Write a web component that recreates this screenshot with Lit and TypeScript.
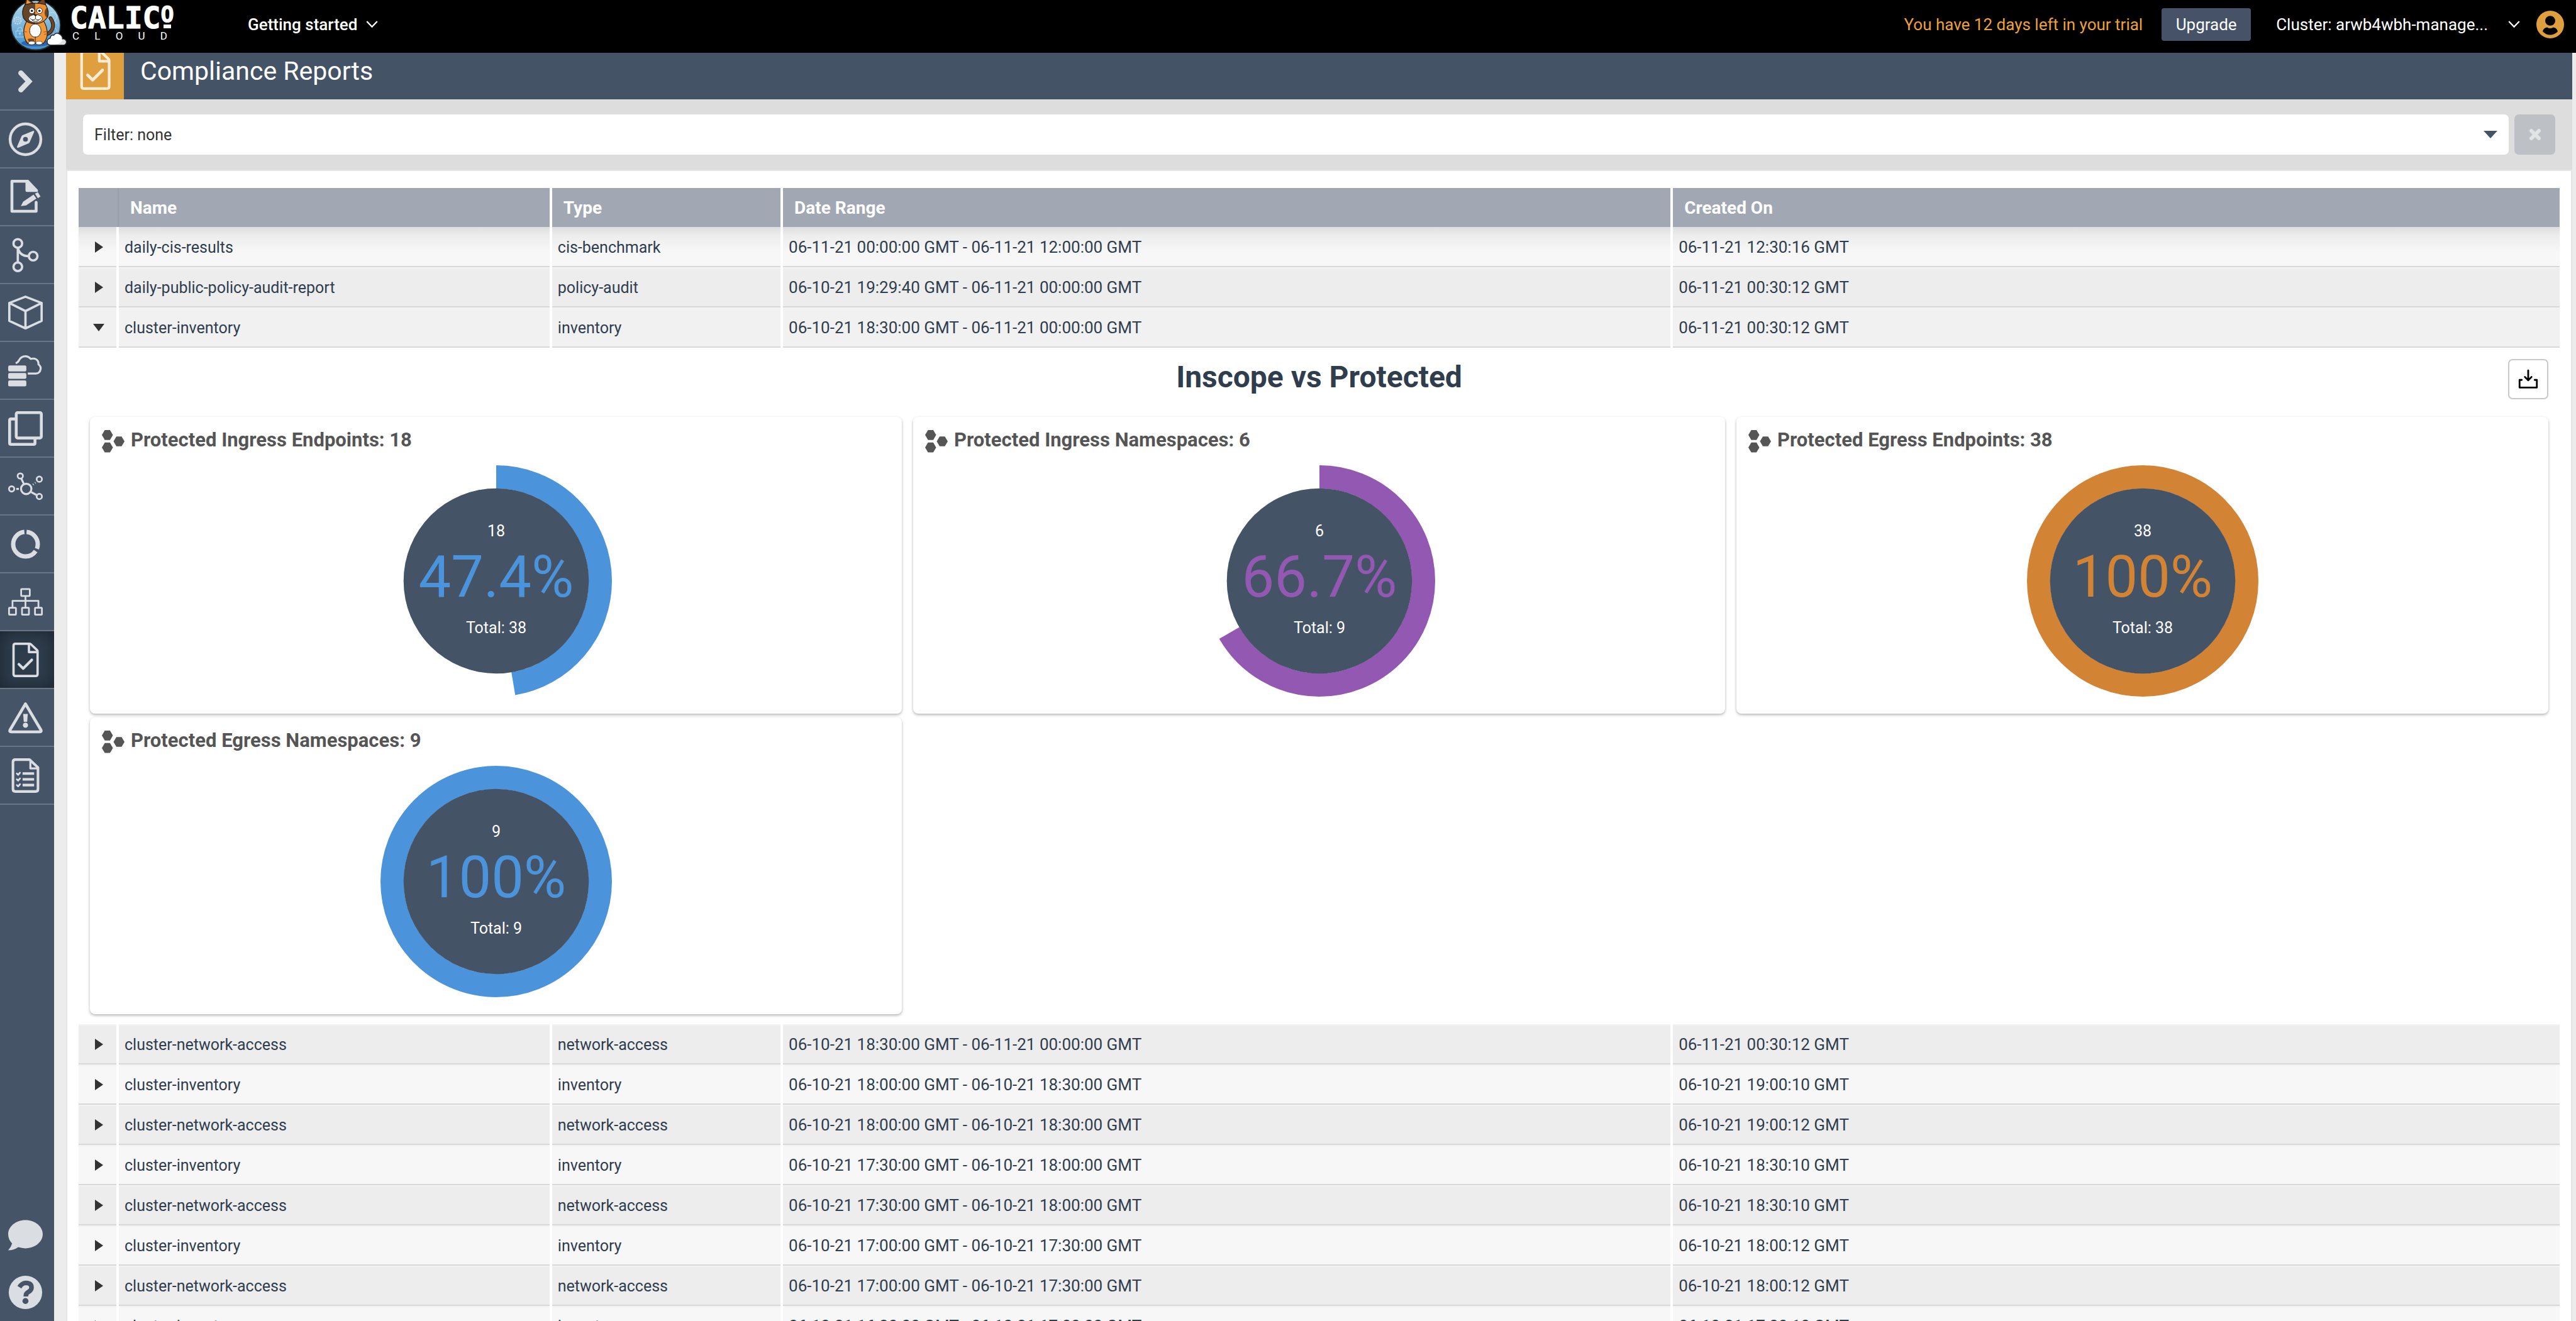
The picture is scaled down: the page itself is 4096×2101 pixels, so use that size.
import { LitElement, html, css, svg, nothing, type TemplateResult, type SVGTemplateResult } from "lit";
import { customElement, property, state } from "lit/decorators.js";
import { classMap } from "lit/directives/class-map.js";

interface Report {
  name: string;
  type: string;
  range: string;
  created: string;
}

interface Gauge {
  title: string;
  count: number;
  total: number;
  tone: "blue" | "purple" | "orange";
}

const REPORTS: Report[] = [
  { name: "daily-cis-results", type: "cis-benchmark", range: "06-11-21 00:00:00 GMT - 06-11-21 12:00:00 GMT", created: "06-11-21 12:30:16 GMT" },
  { name: "daily-public-policy-audit-report", type: "policy-audit", range: "06-10-21 19:29:40 GMT - 06-11-21 00:00:00 GMT", created: "06-11-21 00:30:12 GMT" },
  { name: "cluster-inventory", type: "inventory", range: "06-10-21 18:30:00 GMT - 06-11-21 00:00:00 GMT", created: "06-11-21 00:30:12 GMT" },
  { name: "cluster-network-access", type: "network-access", range: "06-10-21 18:30:00 GMT - 06-11-21 00:00:00 GMT", created: "06-11-21 00:30:12 GMT" },
  { name: "cluster-inventory", type: "inventory", range: "06-10-21 18:00:00 GMT - 06-10-21 18:30:00 GMT", created: "06-10-21 19:00:10 GMT" },
  { name: "cluster-network-access", type: "network-access", range: "06-10-21 18:00:00 GMT - 06-10-21 18:30:00 GMT", created: "06-10-21 19:00:12 GMT" },
  { name: "cluster-inventory", type: "inventory", range: "06-10-21 17:30:00 GMT - 06-10-21 18:00:00 GMT", created: "06-10-21 18:30:10 GMT" },
  { name: "cluster-network-access", type: "network-access", range: "06-10-21 17:30:00 GMT - 06-10-21 18:00:00 GMT", created: "06-10-21 18:30:10 GMT" },
  { name: "cluster-inventory", type: "inventory", range: "06-10-21 17:00:00 GMT - 06-10-21 17:30:00 GMT", created: "06-10-21 18:00:12 GMT" },
  { name: "cluster-network-access", type: "network-access", range: "06-10-21 17:00:00 GMT - 06-10-21 17:30:00 GMT", created: "06-10-21 18:00:12 GMT" },
  { name: "cluster-inventory", type: "inventory", range: "06-10-21 16:30:00 GMT - 06-10-21 17:00:00 GMT", created: "06-10-21 17:30:10 GMT" },
];

const GAUGES: Gauge[] = [
  { title: "Protected Ingress Endpoints", count: 18, total: 38, tone: "blue" },
  { title: "Protected Ingress Namespaces", count: 6, total: 9, tone: "purple" },
  { title: "Protected Egress Endpoints", count: 38, total: 38, tone: "orange" },
  { title: "Protected Egress Namespaces", count: 9, total: 9, tone: "blue" },
];

/* Document with folded corner and tick, shared by the menu and the page title. */
const docCheck = svg`
  <path d="M36 2H12.500Q9.300 2 9.300 5.200V54.800Q9.300 58 12.500 58H47.800Q51 58 51 54.800V15.500Q51 14 50 13L39.500 3Q38.500 2 36 2Z" stroke-width="4"/>
  <path d="M36 3V16.500H50.500" stroke-width="4"/>
  <path d="M18.500 37.500L26 45L41 30" stroke-width="4.500"/>`;

const MENU: { label: string; art: SVGTemplateResult; active?: boolean }[] = [
  { label: "Expand menu", art: svg`<path d="M22 15.500L36 30L22 44.500" stroke-width="9" stroke-linejoin="miter"/>` },
  {
    label: "Dashboard",
    art: svg`<circle cx="30" cy="30" r="26.700" stroke-width="4.800"/>
      <path class="solid" fill-rule="evenodd" d="M43 15.500Q45.500 14.500 45 17.500L37.500 34.500Q37 36 35.500 37L18 44.500Q14.500 45.500 15.500 42.500L23 25Q23.600 23.500 25 22.800ZM30 25.800A4.200 4.200 0 1 0 30 34.200A4.200 4.200 0 1 0 30 25.800Z"/>`,
  },
  {
    label: "Policies",
    art: svg`<path d="M32 2.500H6.500V54.500H48.500V39" stroke-width="5"/>
      <path class="solid" d="M30 0H35L51.500 17.500V21H32.500Q30 21 30 18.500Z"/>
      <path class="solid" d="M22 45.500L26 38L44 25.500L49 32.500L31 44.500Z"/>
      <path class="solid" d="M46.500 24L51.500 21.500L56 29L51.500 32Z"/>`,
  },
  {
    label: "Service graph",
    art: svg`<circle cx="16.700" cy="10" r="7.500" stroke-width="4"/><circle cx="16.700" cy="50.500" r="7.500" stroke-width="4"/><circle cx="43.300" cy="32" r="7.500" stroke-width="4"/>
      <path d="M16.700 18V43M17 18Q20 32 35.500 32" stroke-width="4"/>`,
  },
  { label: "Endpoints", art: svg`<path d="M30 2L58 13V44L30 57L2 44V13ZM2 13L30 27L58 13M30 27V57" stroke-width="4"/>` },
  {
    label: "Nodes",
    art: svg`<path d="M13 17Q17 16 18.500 12.500Q22 5 30 5Q35 5 39 9.500Q48 7.500 51.500 13.500Q53 16 52.500 19Q57 23 56.300 27Q55 35 48 35H34" stroke-width="3.500" stroke-linecap="butt"/>
      <rect class="solid" x="0" y="21" width="31.500" height="10.300" rx="2.500"/><rect class="solid" x="0" y="34" width="31.500" height="10.300" rx="2.500"/><rect class="solid" x="0" y="47" width="31.500" height="10.300" rx="2.500"/>`,
  },
  {
    label: "Network sets",
    art: svg`<rect x="14" y="2.500" width="43.500" height="44" rx="2.500" stroke-width="5"/><path d="M12 13.500H5Q2.500 13.500 2.500 16V55Q2.500 57.500 5 57.500H44Q46.500 57.500 46.500 55V49" stroke-width="5"/>`,
  },
  {
    label: "Managed clusters",
    art: svg`<circle cx="31.300" cy="34.400" r="9" stroke-width="3.500"/><circle cx="21" cy="12" r="4.600" stroke-width="3"/><circle cx="54" cy="17.600" r="4.600" stroke-width="3"/><circle cx="6" cy="34.400" r="4.600" stroke-width="3"/><circle cx="54" cy="47.600" r="4.600" stroke-width="3"/>
      <path d="M23 17L27 25.500M40 40L49 45M14 34.400H18.500M43 27L44 26.200M46.700 24.200L47.500 23.600" stroke-width="3.500" stroke-linecap="butt"/>`,
  },
  {
    label: "Usage",
    art: svg`<circle cx="30" cy="30" r="21.300" stroke-width="7.600" stroke-linecap="butt" pathLength="100" stroke-dasharray="29.500 3.500 64 3" stroke-dashoffset="-1.500" transform="rotate(-90 30 30)"/>`,
  },
  {
    label: "Topology",
    art: svg`<rect x="22.500" y="7.500" width="15" height="12" rx="1" stroke-width="3"/><rect x="1.500" y="40" width="12" height="12" rx="1" stroke-width="3"/><rect x="24" y="40" width="12" height="12" rx="1" stroke-width="3"/><rect x="46.500" y="40" width="12" height="12" rx="1" stroke-width="3"/>
      <path d="M7.500 39V28H52.500V39M30 20V39" stroke-width="3"/>`,
  },
  { label: "Compliance", art: docCheck, active: true },
  {
    label: "Alerts",
    art: svg`<path d="M30 6L57 51.500Q58 54.500 55 54.500H5Q2 54.500 3 51.500Z" stroke-width="5"/><path class="solid" d="M26 23.500H34L33 37H27Z"/><circle class="solid" cx="30" cy="43" r="4.500"/>`,
  },
  {
    label: "Logs",
    art: svg`<path d="M37 2.300H12.500Q8.300 2.300 8.300 6.500V53.500Q8.300 57.700 12.500 57.700H47.500Q51.700 57.700 51.700 53.500V16Z" stroke-width="4.500"/><path d="M38.500 3V17.500H51" stroke-width="3.500"/>
      <path d="M25 26.500H45M25 36.500H45M25 46.500H45" stroke-width="4.500" stroke-linecap="butt"/>
      <path d="M15 26.500L17.300 28.700L20.500 25M15 36.500L17.300 38.700L20.500 35M15 46.500L17.300 48.700L20.500 45" stroke-width="3"/>`,
  },
];

const FOOTER_MENU: { label: string; art: SVGTemplateResult }[] = [
  { label: "Feedback", art: svg`<path class="solid" d="M30 3.700C46.500 3.700 60 14.700 60 28.200S46.500 52.800 30 52.800Q23.500 52.800 17.500 50.800Q9.500 56.500 0 56.300Q5 51 6.800 44.500Q0 37.500 0 28.200C0 14.700 13.500 3.700 30 3.700Z"/>` },
  {
    label: "Help",
    art: svg`<circle class="solid" cx="30" cy="30" r="29"/><path class="cut" d="M19.500 21Q24 13.500 31 13.500Q40.500 14 40.500 21.500Q40.500 26 35.500 29Q30.500 31.500 30.500 37" stroke-width="8" stroke-linecap="butt"/><circle class="cut-dot" cx="30" cy="45" r="5.200"/>`,
  },
];

@customElement("app-mascot")
class AppMascot extends LitElement {
  static styles = css`
    :host { display: block; width: 95px; height: 84px; }
    svg { display: block; width: 100%; height: 100%; }
  `;

  render() {
    return html`<svg viewBox="50 0 314 276" aria-hidden="true">
      <defs>
        <linearGradient id="sky" x1="0" y1="0" x2="0" y2="1"><stop offset="0" stop-color="#b9dcea"/><stop offset="1" stop-color="#3f8fcb"/></linearGradient>
        <clipPath id="face"><path d="M132 24Q186 6 240 24Q262 60 250 90Q226 124 186 124Q142 124 124 94Q110 58 132 24Z"/></clipPath>
      </defs>
      <circle cx="188" cy="132" r="130" fill="url(#sky)" stroke="#24292e" stroke-width="6"/>
      <g fill="none" stroke="#cfe6f3" stroke-width="3" opacity="0.800">
        <circle cx="93" cy="107" r="18" stroke-dasharray="8 4" stroke-width="7"/><circle cx="93" cy="107" r="8"/>
        <circle cx="122" cy="92" r="9" stroke-dasharray="5 3"/>
        <rect x="84" y="162" width="42" height="32"/><path d="M93 162V153Q93 143 105 143Q117 143 117 153V162M105 174V185"/><circle cx="105" cy="174" r="4"/>
        <circle cx="274" cy="88" r="24"/><path d="M287 106L299 124"/>
        <circle cx="286" cy="162" r="14" stroke-dasharray="7 4"/>
      </g>
      <ellipse cx="188" cy="226" rx="76" ry="17" fill="#2e66ad"/>
      <path d="M244 180Q276 168 279 138Q281 116 266 96" fill="none" stroke="#241a14" stroke-width="20" stroke-linecap="round"/>
      <path d="M244 180Q276 168 279 138Q281 116 266 96" fill="none" stroke="#6b4726" stroke-width="13" stroke-linecap="round"/>
      <path d="M141 110Q120 148 127 186Q131 210 147 228H228Q247 206 249 180Q249 140 230 110Z" fill="#f0983a" stroke="#241a14" stroke-width="4"/>
      <path d="M246 164L230 168M248 178L232 180M128 164L142 168" stroke="#b8651f" stroke-width="4"/>
      <ellipse cx="186" cy="160" rx="30" ry="35" fill="#fff" stroke="#241a14" stroke-width="3"/>
      <path d="M146 204Q164 198 180 206V224H154Z" fill="#6b4726"/>
      <path d="M186 190V226" stroke="#241a14" stroke-width="3"/>
      <ellipse cx="167" cy="225" rx="17" ry="9" fill="#fff" stroke="#241a14" stroke-width="2"/>
      <ellipse cx="206" cy="225" rx="17" ry="9" fill="#fff" stroke="#241a14" stroke-width="2"/>
      <path d="M131 32L139 -14L178 18ZM242 32L232 -14L196 18Z" fill="#6b4726" stroke="#241a14" stroke-width="4"/>
      <path d="M138 24L143 -2L164 16Z" fill="#f0983a"/>
      <g clip-path="url(#face)">
        <path d="M100 0H186V130H100Z" fill="#664426"/><path d="M186 0H270V130H186Z" fill="#ef8f2f"/>
        <ellipse cx="252" cy="66" rx="17" ry="26" fill="#664426"/>
      </g>
      <path d="M132 24Q186 6 240 24Q262 60 250 90Q226 124 186 124Q142 124 124 94Q110 58 132 24Z" fill="none" stroke="#241a14" stroke-width="4"/>
      <ellipse cx="187" cy="97" rx="37" ry="21" fill="#fff" stroke="#241a14" stroke-width="3"/>
      <path d="M176 76H198L187 86Z" fill="#241a14"/>
      <path d="M187 84V98M157 94Q172 112 187 98Q202 112 217 94M170 106Q187 118 204 106" fill="none" stroke="#241a14" stroke-width="3"/>
      <circle cx="168" cy="56" r="15" fill="#fff" stroke="#241a14" stroke-width="3"/><circle cx="208" cy="56" r="15" fill="#fff" stroke="#241a14" stroke-width="3"/>
      <circle cx="168" cy="56" r="6" fill="#1c1c1c"/><circle cx="208" cy="56" r="6" fill="#1c1c1c"/>
      <path d="M266 236Q247 234 248 217Q249 203 264 200Q268 180 283 184Q298 165 316 180Q330 190 329 204Q349 206 349 221Q347 236 332 236Z" fill="#fff" stroke="#24292e" stroke-width="5"/>
      <path d="M288 233Q322 230 332 205Q347 208 346 221Q344 233 332 233Z" fill="#dedfe2"/>
    </svg>`;
  }
}

@customElement("app-gauge")
class AppGauge extends LitElement {
  @property({ attribute: false }) gauge!: Gauge;

  static styles = css`
    :host {
      display: flex;
      flex-direction: column;
      gap: 20px;
      padding: 17px 19px 27px;
      background: #fff;
      border-radius: 8px;
      box-shadow: 0 2px 4px rgba(0, 0, 0, 0.3);
    }
    .heading {
      display: flex;
      align-items: flex-end;
      gap: 10px;
      margin: 0;
      font-size: 31px;
      line-height: 40px;
      font-weight: 700;
      color: #555;
    }
    .hexes { width: 36px; height: 36px; fill: #555; flex: none; }
    .dial { display: block; width: 368px; height: 368px; align-self: center; }
    .disc { fill: #445365; }
    .ring { fill: none; stroke: currentColor; stroke-width: 37; }
    .small { fill: #fff; font-size: 25px; text-anchor: middle; }
    .big { fill: currentColor; font-size: 92px; font-weight: 400; text-anchor: middle; }
    .blue { color: #4b94dc; }
    .purple { color: #9359b2; }
    .orange { color: #d28434; }
  `;

  render() {
    const { title, count, total, tone } = this.gauge;
    const share = (count / total) * 100;
    const label = `${Number(share.toFixed(1))}%`;
    return html`
      <h3 class="heading">
        <svg class="hexes" viewBox="0 0 39 39" aria-hidden="true">
          <path d="M5 0H14L19 8.500L14 17H5L0 8.500ZM5 21.500H14L19 30L14 38.500H5L0 30ZM25 11H34L39 19.500L34 28H25L20 19.500Z"/>
        </svg>
        <span>${title}: ${count}</span>
      </h3>
      <svg class="dial ${tone}" viewBox="0 0 368 368" role="img" aria-label=${`${count} of ${total}`}>
        <circle class="ring" cx="184" cy="184" r="165.500" pathLength="100" stroke-dasharray=${share >= 100 ? "none" : `${share} 100`} transform="rotate(-90 184 184)"/>
        <circle class="disc" cx="184" cy="184" r="147.300"/>
        <text class="small" x="184" y="113">${count}</text>
        <text class="big" x="184" y="209">${label}</text>
        <text class="small" x="184" y="267">Total: ${total}</text>
      </svg>
    `;
  }
}

@customElement("app-root")
class AppRoot extends LitElement {
  @state() private open = 2;

  static styles = css`
    :host {
      display: flex;
      flex-direction: column;
      height: 100vh;
      overflow: hidden;
      background: #ececec;
      color: #2f3d4d;
      font-family: Roboto, "Liberation Sans", sans-serif;
      font-size: 25px;
    }
    *, *::before, *::after { box-sizing: border-box; }
    button, select { font: inherit; color: inherit; margin: 0; padding: 0; border: 0; background: none; }

    .topbar {
      flex: none;
      display: flex;
      align-items: center;
      height: 84px;
      padding: 0 19px 7px 15px;
      background: #000;
      color: #fff;
      font-size: 26px;
    }
    .brand { display: flex; align-self: flex-start; gap: 1px; color: inherit; text-decoration: none; }
    .wordmark { display: flex; flex-direction: column; width: 162px; padding-top: 8px; }
    .calico { display: flex; justify-content: space-between; font-family: "DejaVu Sans Mono", monospace; font-weight: 700; font-size: 48px; line-height: 41px; -webkit-text-stroke: 1px #fff; }
    .raised { display: flex; flex-direction: column; align-items: center; font-size: 35px; line-height: 31px; }
    .raised::after { content: ""; width: 12px; height: 6px; background: #fff; }
    .cloud { display: flex; justify-content: space-between; padding: 0 7px 0 4px; font-size: 17px; line-height: 17px; }
    .started { display: flex; align-items: center; gap: 14px; margin-left: 121px; font-weight: 500; }
    .chev { width: 19px; height: 11px; fill: none; stroke: #fff; stroke-width: 2.5; }
    .trial { margin-left: auto; color: #eda03b; }
    .upgrade { width: 142px; height: 52px; margin-left: 30px; border-radius: 4px; background: #455268; color: #fff; }
    .cluster { display: flex; align-items: center; gap: 32px; margin-left: 40px; }
    .avatar { display: flex; margin-left: 26px; }
    .avatar svg { width: 44px; height: 44px; }

    .body { flex: 1; min-height: 0; display: flex; }
    .side { flex: none; width: 86px; display: flex; flex-direction: column; background: #455466; }
    .side-foot { display: flex; flex-direction: column; margin-top: auto; }
    .item { display: flex; align-items: center; justify-content: center; height: 92px; padding-right: 6px; border-bottom: 2px solid #6a7685; }
    .item.plain { height: 91px; border-bottom: 0; }
    .item.active { background: #2e3d4c; box-shadow: inset 0 0 26px #1b242d; }
    .icon { width: 55px; height: 55px; fill: none; stroke: #dadde2; stroke-linecap: round; stroke-linejoin: round; overflow: visible; }
    .icon .solid { fill: #dadde2; stroke: none; }
    .icon .cut { stroke: #455466; }
    .icon .cut-dot { fill: #455466; stroke: none; }

    .main { flex: 1; min-width: 0; display: flex; flex-direction: column; margin: 0 6px 0 19px; }
    .title { flex: none; display: flex; height: 74px; overflow: hidden; background: #445365; color: #fff; }
    .badge { display: flex; align-items: flex-end; justify-content: center; width: 92px; padding-bottom: 15px; background: #e09f3e; }
    .badge .icon { flex: none; width: 63px; height: 63px; stroke: #fbecd8; }
    .title h1 { margin: 0; padding-left: 26px; font-size: 41px; line-height: 58px; font-weight: 400; }

    .filter { flex: none; display: flex; gap: 9px; padding: 24px 27px; background: #ddd; }
    .field { flex: 1; display: grid; align-items: center; }
    .field > * { grid-area: 1 / 1; }
    .field select { width: 100%; height: 64px; padding: 0 18px; border-radius: 7px; background: #fff; color: #333; appearance: none; }
    .caret { justify-self: end; width: 22px; height: 12px; margin-right: 18px; fill: #445365; pointer-events: none; }
    .clear { display: flex; align-items: center; justify-content: center; width: 65px; height: 64px; border-radius: 7px; background: #bdc1c5; }
    .clear svg { width: 20px; height: 20px; stroke: #e1e3e5; stroke-width: 6; stroke-linecap: round; }

    .panel { flex: 1; min-height: 0; overflow: hidden; padding: 27px 18px 0; border: 2px solid #e5e5e5; border-bottom: 0; background: #fff; }
    .reports { width: 100%; table-layout: fixed; border-collapse: collapse; }
    .c-toggle { width: 64px; }
    .c-name { width: 17.46%; }
    .c-type { width: 9.31%; }
    .c-range { width: 35.87%; }
    .reports th { height: 62px; padding: 0 18px; background: linear-gradient(#fff, #fff) right / 4px 100% no-repeat #a1a8b4; color: #fff; font-size: 28px; font-weight: 700; text-align: left; }
    .reports th:first-child { background: linear-gradient(#979fab, #979fab) right / 2px 100% no-repeat #a1a8b4; }
    .reports th:last-child { background: #a1a8b4; }
    .row { --fill: #ededed; }
    .row.light { --fill: #f7f7f7; }
    .row.open { --fill: #f1f1f1; }
    .row td {
      height: 64px;
      padding: 0 9px;
      white-space: nowrap;
      background:
        linear-gradient(#fff, #fff) right / 4px 100% no-repeat,
        linear-gradient(#d8d8d8, #d8d8d8) bottom / 100% 2px no-repeat,
        linear-gradient(#f3f3f3, #f3f3f3) top / 100% 2px no-repeat,
        var(--fill);
    }
    .row td:last-child { background: linear-gradient(#d8d8d8, #d8d8d8) bottom / 100% 2px no-repeat, linear-gradient(#f3f3f3, #f3f3f3) top / 100% 2px no-repeat, var(--fill); }
    .row.first td { background: linear-gradient(#fff, #fff) right / 4px 100% no-repeat, linear-gradient(#d8d8d8, #d8d8d8) bottom / 100% 2px no-repeat, linear-gradient(#dedede, #ededed 14px, #f7f7f7 40px); }
    .row.first td:last-child { background: linear-gradient(#d8d8d8, #d8d8d8) bottom / 100% 2px no-repeat, linear-gradient(#dedede, #ededed 14px, #f7f7f7 40px); }
    .row td.date { font-size: 26px; }
    .row td.toggle { padding: 0; }
    .toggle button { display: flex; align-items: center; justify-content: center; width: 100%; height: 40px; }
    .tri { width: 18px; height: 18px; fill: #333; }

    .detail { padding: 0 18px 16px; }
    .detail-head { display: grid; grid-template-columns: 64px 1fr 64px; padding: 18px 0 28px; }
    .detail-head h2 { grid-column: 2; margin: 0; font-size: 48px; line-height: 58px; font-weight: 700; text-align: center; }
    .download { display: flex; align-items: center; justify-content: center; width: 64px; height: 64px; border: 2px solid #c9c9c9; border-radius: 7px; background: #fff; }
    .download svg { width: 30px; height: 30px; fill: none; stroke: #000; stroke-width: 9; stroke-linecap: round; stroke-linejoin: round; overflow: visible; }
    .cards { display: grid; grid-template-columns: repeat(3, minmax(0, 1fr)); gap: 6px 18px; }
  `;

  private chevron() {
    return html`<svg class="chev" viewBox="0 0 20 12" aria-hidden="true"><path d="M1 1L10 10.500L19 1"/></svg>`;
  }

  private menuItem(label: string, art: SVGTemplateResult, active = false, plain = false) {
    return html`<a class=${classMap({ item: true, active, plain })} href="#" aria-label=${label}>
      <svg class="icon" viewBox="0 0 60 60" aria-hidden="true">${art}</svg>
    </a>`;
  }

  private detail(): TemplateResult {
    return html`<tr>
      <td class="detail" colspan="5">
        <div class="detail-head">
          <h2>Inscope vs Protected</h2>
          <button class="download" type="button" aria-label="Download report">
            <svg viewBox="483 180 96 96" aria-hidden="true"><path d="M531 184V234M514 217L531 234L548 217M498 232H487V271H575V232H564"/></svg>
          </button>
        </div>
        <div class="cards">${GAUGES.map((g) => html`<app-gauge .gauge=${g}></app-gauge>`)}</div>
      </td>
    </tr>`;
  }

  private row(report: Report, index: number) {
    const open = index === this.open;
    const light = index < 3 ? index === 0 : index % 2 === 0;
    return html`
      <tr class=${classMap({ row: true, light, open, first: index === 0 })}>
        <td class="toggle">
          <button type="button" aria-expanded=${open ? "true" : "false"} aria-label="Toggle ${report.name}" @click=${() => (this.open = open ? -1 : index)}>
            <svg class="tri" viewBox="0 0 18 18" aria-hidden="true"><path d=${open ? "M0 3H18L9 15Z" : "M3 0L16 9L3 18Z"}/></svg>
          </button>
        </td>
        <td>${report.name}</td>
        <td>${report.type}</td>
        <td class="date">${report.range}</td>
        <td class="date">${report.created}</td>
      </tr>
      ${open ? this.detail() : nothing}
    `;
  }

  render() {
    return html`
      <header class="topbar">
        <a class="brand" href="#" aria-label="Calico Cloud">
          <app-mascot></app-mascot>
          <span class="wordmark">
            <span class="calico"><span>CALIC</span><span class="raised">O</span></span>
            <span class="cloud"><span>C</span><span>L</span><span>O</span><span>U</span><span>D</span></span>
          </span>
        </a>
        <button class="started" type="button">Getting started ${this.chevron()}</button>
        <span class="trial">You have 12 days left in your trial</span>
        <button class="upgrade" type="button">Upgrade</button>
        <button class="cluster" type="button"><span>Cluster: arwb4wbh-manage...</span>${this.chevron()}</button>
        <button class="avatar" type="button" aria-label="Account">
          <svg viewBox="0 0 44 44" aria-hidden="true">
            <circle cx="22" cy="22" r="22" fill="#e09f3e"/>
            <ellipse cx="22" cy="16" rx="8" ry="7.800" fill="#000"/>
            <path d="M10 33Q11 27.500 17 26.500Q22 29.500 27 26.500Q33 27.500 34 33Q29 38.500 22 38.500T10 33Z" fill="#000"/>
          </svg>
        </button>
      </header>
      <div class="body">
        <nav class="side">
          ${MENU.map((m) => this.menuItem(m.label, m.art, m.active))}
          <div class="side-foot">${FOOTER_MENU.map((m) => this.menuItem(m.label, m.art, false, true))}</div>
        </nav>
        <main class="main">
          <div class="title">
            <span class="badge"><svg class="icon" viewBox="0 0 60 60" aria-hidden="true">${docCheck}</svg></span>
            <h1>Compliance Reports</h1>
          </div>
          <div class="filter">
            <div class="field">
              <select aria-label="Filter"><option>Filter: none</option></select>
              <svg class="caret" viewBox="0 0 22 12" aria-hidden="true"><path d="M0 0H22L11 12Z"/></svg>
            </div>
            <button class="clear" type="button" aria-label="Clear filter">
              <svg viewBox="0 0 20 20" aria-hidden="true"><path d="M4 4L16 16M16 4L4 16"/></svg>
            </button>
          </div>
          <section class="panel">
            <table class="reports">
              <colgroup><col class="c-toggle"/><col class="c-name"/><col class="c-type"/><col class="c-range"/><col/></colgroup>
              <thead>
                <tr><th></th><th>Name</th><th>Type</th><th>Date Range</th><th>Created On</th></tr>
              </thead>
              <tbody>${REPORTS.map((r, i) => this.row(r, i))}</tbody>
            </table>
          </section>
        </main>
      </div>
    `;
  }
}
